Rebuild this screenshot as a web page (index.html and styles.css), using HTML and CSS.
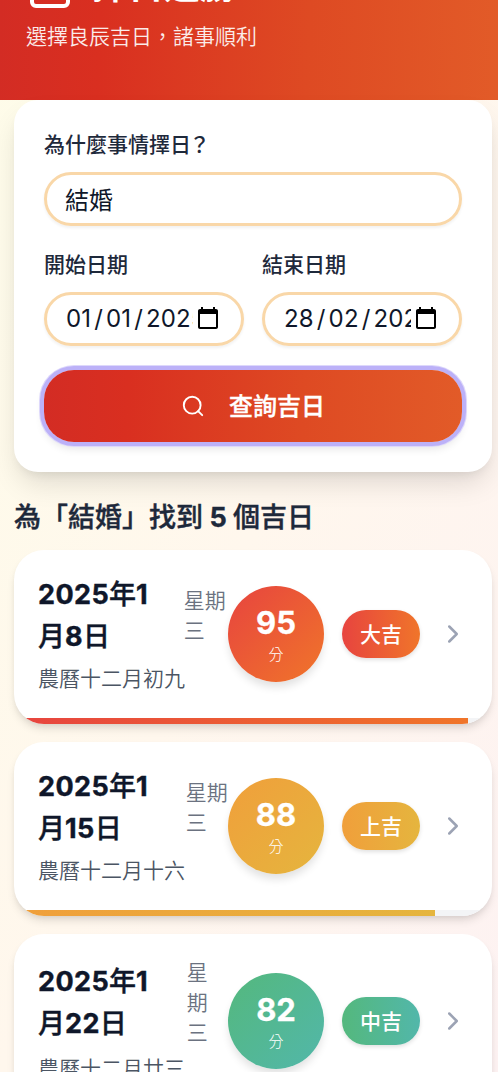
FILE: index.html
```html
<!DOCTYPE html>
<html lang="zh-Hant">
<head>
<meta charset="utf-8">
<meta name="viewport" content="width=device-width, initial-scale=1">
<title>擇日通勝</title>
<link rel="stylesheet" href="styles.css">
</head>
<body>
<header class="hero">
  <div class="hero-title">
    <svg class="hero-icon" viewBox="0 0 24 24" fill="none" stroke="currentColor" stroke-width="2" stroke-linecap="round" stroke-linejoin="round"><path d="M8 2v4M16 2v4M3 10h18"/><rect x="3" y="4" width="18" height="18" rx="2"/></svg>
    <h1>擇日通勝</h1>
  </div>
  <p>選擇良辰吉日，諸事順利</p>
</header>
<main class="page">
  <form class="search-card">
    <div class="field">
      <label>為什麼事情擇日<span class="mark">？</span></label>
      <div class="control">結婚</div>
    </div>
    <div class="date-grid">
      <div class="field">
        <label>開始日期</label>
        <div class="control date"><span class="date-text">01<i>/</i>01<i>/</i>2025</span><svg class="cal" viewBox="0 0 24 24"><path d="M20 3h-1V1h-2v2H7V1H5v2H4c-1.100 0-2 .9-2 2v16c0 1.100.9 2 2 2h16c1.100 0 2-.9 2-2V5c0-1.100-.9-2-2-2zm0 18H4V8h16v13z"/></svg></div>
      </div>
      <div class="field">
        <label>結束日期</label>
        <div class="control date"><span class="date-text">28<i>/</i>02<i>/</i>2025</span><svg class="cal" viewBox="0 0 24 24"><path d="M20 3h-1V1h-2v2H7V1H5v2H4c-1.100 0-2 .9-2 2v16c0 1.100.9 2 2 2h16c1.100 0 2-.9 2-2V5c0-1.100-.9-2-2-2zm0 18H4V8h16v13z"/></svg></div>
      </div>
    </div>
    <button type="button" class="submit">
      <svg viewBox="0 0 24 24" fill="none" stroke="currentColor" stroke-width="1.900" stroke-linecap="round"><circle cx="11.200" cy="11.200" r="8.400"/><path d="m21.200 21.200-4.100-4.100"/></svg>
      <span>查詢吉日</span>
    </button>
  </form>

  <h2 class="results-title">為「結婚」找到 <b>5</b> 個吉日</h2>
  <div class="results">
    <article class="result great">
      <div class="result-body">
        <div class="info">
          <div class="day"><h3><b>2025</b>年<b>1</b>月<b>8</b>日</h3><span class="weekday">星期三</span></div>
          <p class="lunar">農曆十二月初九</p>
        </div>
        <div class="score"><b>95</b><small>分</small></div>
        <span class="grade">大吉</span>
        <svg class="chevron" viewBox="0 0 24 24"><path d="m9 18 6-6-6-6"/></svg>
      </div>
      <div class="track"><div class="fill" style="width:95%"></div></div>
    </article>
    <article class="result high">
      <div class="result-body">
        <div class="info">
          <div class="day"><h3><b>2025</b>年<b>1</b>月<b>15</b>日</h3><span class="weekday">星期三</span></div>
          <p class="lunar">農曆十二月十六</p>
        </div>
        <div class="score"><b>88</b><small>分</small></div>
        <span class="grade">上吉</span>
        <svg class="chevron" viewBox="0 0 24 24"><path d="m9 18 6-6-6-6"/></svg>
      </div>
      <div class="track"><div class="fill" style="width:88%"></div></div>
    </article>
    <article class="result mid">
      <div class="result-body">
        <div class="info">
          <div class="day"><h3><b>2025</b>年<b>1</b>月<b>22</b>日</h3><span class="weekday">星期三</span></div>
          <p class="lunar">農曆十二月廿三</p>
        </div>
        <div class="score"><b>82</b><small>分</small></div>
        <span class="grade">中吉</span>
        <svg class="chevron" viewBox="0 0 24 24"><path d="m9 18 6-6-6-6"/></svg>
      </div>
      <div class="track"><div class="fill" style="width:82%"></div></div>
    </article>
  </div>
</main>
</body>
</html>
```
FILE: styles.css
```css
* { box-sizing: border-box; margin: 0; padding: 0; }
body {
  height: 1072px;
  overflow: hidden;
  font-family: Inter, "Noto Sans CJK TC", sans-serif;
  font-size: 24px;
  color: #1e293b;
  background: linear-gradient(to bottom right, #fefce9, #fff7ed 50%, #fdf2f2);
  display: flex;
  flex-direction: column;
}
svg { display: block; flex: none; }

.hero {
  flex: none;
  height: 100px;
  padding: 0 26px 48px;
  display: flex;
  flex-direction: column;
  justify-content: flex-end;
  gap: 12px;
  overflow: hidden;
  color: #fff;
  background: linear-gradient(92deg, #d32c24, #d92f20 20%, #de4a23 62%, #e25b28);
}
.hero-title { display: flex; align-items: center; gap: 18px; }
.hero-icon { width: 48px; height: 48px; }
.hero h1 { font-size: 36px; line-height: 48px; font-weight: 700; }
.hero p { font-size: 21px; line-height: 30px; font-weight: 350; opacity: .9; }

.page { flex: none; padding: 0 6px 0 14px; }
.search-card {
  padding: 30px;
  display: flex;
  flex-direction: column;
  gap: 24px;
  background: #fff;
  border-radius: 24px;
  box-shadow: 0 15px 28px -5px rgba(0,0,0,.13), 0 6px 12px -6px rgba(0,0,0,.1);
}
.field { min-width: 0; display: flex; flex-direction: column; gap: 12px; }
.field label { font-size: 21px; line-height: 30px; font-weight: 500; }
.mark { margin-left: -2px; }
.control {
  height: 54px;
  padding: 0 18px 2px;
  display: flex;
  align-items: center;
  color: #0f172a;
  border: 3px solid #f9d7a8;
  border-radius: 27px;
  box-shadow: 0 2px 3px rgba(0,0,0,.06);
}
.date-grid { display: grid; grid-template-columns: 1fr 1fr; gap: 18px; }
.date-text { width: 128px; padding-left: 1px; overflow: hidden; white-space: nowrap; letter-spacing: .15px; }
.date-text i { font-style: normal; padding: 0 3px; }
.cal { width: 24px; height: 24px; margin-left: 3px; }
.submit {
  height: 72px;
  display: flex;
  align-items: center;
  justify-content: center;
  gap: 24px;
  border: 0;
  border-radius: 30px;
  font: inherit;
  font-weight: 500;
  -webkit-text-stroke: .4px currentColor;
  color: #fff;
  background: linear-gradient(92deg, #d32c24, #d92f20 20%, #de4a23 62%, #e25b28);
  box-shadow: 0 0 0 4px #bcb1f8, 0 0 0 5px #ddd8fb, 0 6px 10px rgba(0,0,0,.12);
}
.submit svg { width: 24px; height: 24px; }
.submit span { padding-bottom: 4px; }

.results-title { padding-top: 1px; margin: 24px 0 11px; font-size: 27px; line-height: 42px; font-weight: 500; word-spacing: -.8px; -webkit-text-stroke: .4px currentColor; }
.results-title b { font-weight: 700; }
.results { display: flex; flex-direction: column; gap: 18px; }
.result {
  overflow: hidden;
  background: #fff;
  border-radius: 30px;
  box-shadow: 0 6px 9px -1px rgba(0,0,0,.1), 0 3px 6px -3px rgba(0,0,0,.1);
}
.great { --from: #e7443f; --to: #f0752a; }
.high { --from: #f09f3b; --to: #e5b53e; }
.mid { --from: #54b87d; --to: #52b7aa; }
.result-body { padding: 24px; display: flex; align-items: center; }
.info { flex: 1; min-width: 0; display: flex; flex-direction: column; gap: 6px; }
.day { display: flex; align-items: center; gap: 18px; }
.day h3 { font-size: 27px; line-height: 42px; font-weight: 500; color: #0f172a; word-break: break-all; -webkit-text-stroke: .4px currentColor; }
.day h3 b { font-weight: 700; letter-spacing: .4px; }
.weekday { font-size: 21px; line-height: 30px; font-weight: 350; color: #6b7280; }
.lunar { font-size: 21px; line-height: 30px; font-weight: 350; color: #4b5563; white-space: nowrap; }
.score {
  flex: none;
  width: 96px;
  height: 96px;
  padding-top: 2px;
  display: flex;
  flex-direction: column;
  align-items: center;
  justify-content: center;
  gap: 3px;
  border-radius: 50%;
  color: #fff;
  background: linear-gradient(135deg, var(--from), var(--to));
  box-shadow: 0 6px 9px -1px rgba(0,0,0,.12);
}
.score b { font-size: 31px; line-height: 36px; -webkit-text-stroke: .3px currentColor; }
.score small { font-size: 15px; line-height: 21px; font-weight: 300; }
.grade {
  flex: none;
  margin: 0 18px;
  padding: 1px 18px 0;
  font-size: 21px;
  line-height: 47px;
  font-weight: 500;
  color: #fff;
  border-radius: 24px;
  background: linear-gradient(90deg, var(--from), var(--to));
  box-shadow: 0 2px 4px rgba(0,0,0,.12);
}
.chevron { width: 30px; height: 30px; fill: none; stroke: #9ca3b4; stroke-width: 2; stroke-linecap: round; stroke-linejoin: round; }
.track { height: 6px; background: #f3f4f6; }
.fill { height: 100%; background: linear-gradient(90deg, var(--from), var(--to)); }
```
